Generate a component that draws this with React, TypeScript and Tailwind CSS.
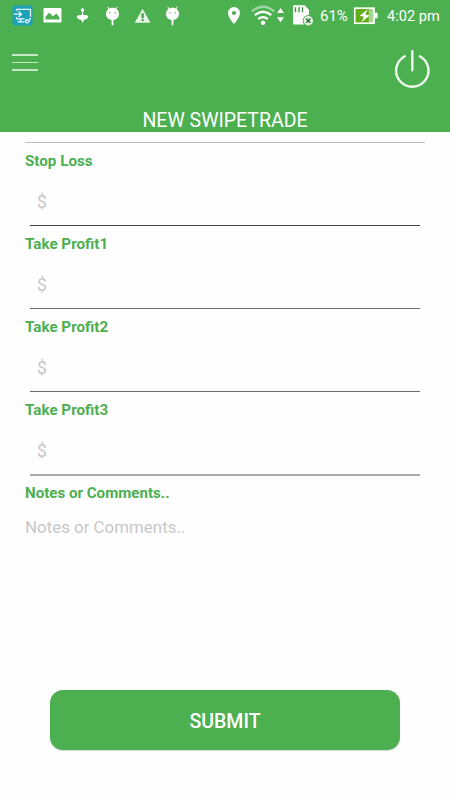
import { useState } from "react"
import type { ReactNode } from "react"

const FIELDS = [
  { label: "Stop Loss", line: "h-[48px] border-b border-[#444444]" },
  { label: "Take Profit1", line: "h-[48px] border-b border-[#6c6c6c]" },
  { label: "Take Profit2", line: "h-[48px] border-b border-[#6c6c6c]" },
  { label: "Take Profit3", line: "h-[49px] border-b-2 border-[#aaaaaa]" },
]

function StatusIcon({ children }: { children: ReactNode }) {
  return (
    <svg width="30" height="32" viewBox="0 0 30 32" className="shrink-0" fill="#fff">
      {children}
    </svg>
  )
}

function AndroidIcon() {
  return (
    <StatusIcon>
      <path d="M12 9 10.800 6.700M19 9l1.200-2.300" stroke="#fff" strokeWidth="1" />
      <path d="M9 13.800c0-3.300 2.700-6 6.500-6s6.500 2.700 6.500 6c0 3.700-2.500 6.200-6.500 6.200S9 17.500 9 13.800Z" />
      <rect x="14.600" y="19" width="1.800" height="6.500" rx="0.900" />
      <circle cx="12.900" cy="12.800" r="0.700" fill="#4caf50" />
      <circle cx="18.100" cy="12.800" r="0.700" fill="#4caf50" />
    </StatusIcon>
  )
}

function StatusBar() {
  return (
    <div className="flex h-8 items-center pl-[7px] text-white">
      {/* notifications */}
      <StatusIcon>
        <rect x="5.500" y="5.500" width="20" height="20" rx="2" fill="#1ba1b8" />
        <g fill="none" stroke="#e6f9fc" strokeWidth="1.300">
          <path d="M9.500 11V9.300h14v7.500M9.500 17v1.800h8M13.500 19v2.700M10.500 21.900h7" />
          <path d="M6.500 14.200h7.500M11.500 11.500l3 2.700-3 2.700" />
          <path d="M19 20h2.500M19 20a1.700 1.700 0 1 0 2.800 1.800l1.700-4" />
        </g>
      </StatusIcon>
      <StatusIcon>
        <path
          fillRule="evenodd"
          d="M7.500 8h16a1 1 0 0 1 1 1v12.500a1 1 0 0 1-1 1h-16a1 1 0 0 1-1-1V9a1 1 0 0 1 1-1Zm1 11.500h14v-2l-3.200-4-3.300 3-3.800-4-3.700 4.500Z"
        />
      </StatusIcon>
      <StatusIcon>
        <circle cx="15.500" cy="10" r="1.700" />
        <path d="M15 11h1v4.500h-1z" />
        <path d="M9.700 16.700c0-1.300 2.500-2 5.800-2s5.900.7 5.900 2-2.500 2.700-4.300 3.100L15.700 23l-1.700-3.200c-2-.4-4.300-1.800-4.300-3.100Z" />
      </StatusIcon>
      <AndroidIcon />
      <StatusIcon>
        <path d="M15.600 8.800 23.500 22.800H7.700Z" fill="#e2f4e3" />
        <path d="M14.700 13.200h1.900v5h-1.900zM14.700 19.300h1.900v1.800h-1.900z" fill="#358a39" />
      </StatusIcon>
      <AndroidIcon />

      {/* system indicators */}
      <svg width="98" height="32" viewBox="0 0 98 32" className="ml-[33px] shrink-0" fill="#fff">
        <path
          fillRule="evenodd"
          d="M14 7a6 6 0 0 0-6 6c0 4.500 6 11 6 11s6-6.500 6-11a6 6 0 0 0-6-6Zm0 3.900a2.100 2.100 0 1 1 0 4.200 2.100 2.100 0 0 1 0-4.200Z"
        />
        <g fill="none" strokeWidth="2.300">
          <path d="M31.800 11.300q11.200-9.200 22.400 0" stroke="#a0d7a2" />
          <path d="M34.700 15.100q8.300-6.600 16.600 0M38.200 19q4.800-3.800 9.600 0" stroke="#fff" />
        </g>
        <circle cx="43" cy="22.800" r="2.200" />
        <path d="M60.500 8 64 13h-7zM60.500 22.200l3.500-5h-7z" />
        <path d="M74 5.200h10.500l4.500 4.500V24.500H74a1 1 0 0 1-1-1V6.200a1 1 0 0 1 1-1Z" />
        <path d="M75.500 7.300v5M79 7.300v5M82.500 7.300v5" stroke="#3f8f43" strokeWidth="1.400" />
        <circle cx="88.300" cy="20.700" r="5.600" fill="#4caf50" />
        <circle cx="88.300" cy="20.700" r="4.700" fill="#e9f6ea" />
        <path d="m86.200 18.600 4.200 4.200M90.400 18.600l-4.200 4.200" stroke="#2f7a33" strokeWidth="1.500" />
      </svg>
      <span className="ml-[2px] w-[33px] whitespace-nowrap text-[15px] leading-8">61%</span>
      <svg width="26" height="32" viewBox="0 0 26 32" className="shrink-0">
        <rect x="1.800" y="8.200" width="19.200" height="15" fill="#a4d78d" stroke="#fff" strokeWidth="1.700" />
        <rect x="2.700" y="9.100" width="13" height="13.200" fill="#62ad16" />
        <rect x="21.800" y="12.700" width="2.800" height="5.600" fill="#fff" />
        <path d="m14.800 9.300-8 6.500 4.200 1-2.600 5.500 8.200-6.900-4.300-1Z" fill="#fff" />
      </svg>
      <span className="ml-[8px] whitespace-nowrap text-[14.600px] leading-8">4:02 pm</span>
    </div>
  )
}

function Header() {
  return (
    <header className="flex h-[132px] shrink-0 flex-col bg-[#4caf50] text-white">
      <StatusBar />
      <div className="flex h-[78px] items-start justify-between pl-3 pr-5">
        <button type="button" aria-label="Menu" className="mt-[22px] flex w-[26px] flex-col gap-[6px]">
          <span className="h-[1.500px] bg-[#c4e8c5]" />
          <span className="h-[1.500px] bg-[#c4e8c5]" />
          <span className="h-[1.500px] bg-[#c4e8c5]" />
        </button>
        <button type="button" aria-label="Log out" className="mt-[16px]">
          <svg width="36" height="42" viewBox="0 0 36 42" fill="none" stroke="#f0faf0" strokeWidth="2.400" strokeLinecap="round">
            <path d="M18.300 3.200v19M10.800 8.200a16.200 16.200 0 1 0 15 0" />
          </svg>
        </button>
      </div>
      <h1 className="text-center text-[19.500px] leading-[22px]">NEW SWIPETRADE</h1>
    </header>
  )
}

function PriceField({ label, line }: { label: string; line: string }) {
  const [value, setValue] = useState("")

  return (
    <label className="flex h-[83px] flex-col">
      <span className="mt-2 text-[15.200px] font-bold leading-5 text-[#4caf50]">{label}</span>
      <input
        value={value}
        onChange={(e) => setValue(e.target.value)}
        placeholder="$"
        inputMode="decimal"
        className={`mx-[5px] mt-[7px] shrink-0 px-[7px] text-[17.500px] text-[#333333] outline-none placeholder:text-[#c8c8c8] ${line}`}
      />
    </label>
  )
}

export default function App() {
  const [notes, setNotes] = useState("")

  return (
    <div className="flex h-[800px] w-[450px] flex-col overflow-hidden bg-[#fefefe] font-[Roboto,sans-serif]">
      <Header />
      <main className="mt-[10px] flex flex-1 flex-col px-[25px]">
        <div className="h-px bg-[#bdbdbd]" />
        {FIELDS.map((field) => (
          <PriceField key={field.label} label={field.label} line={field.line} />
        ))}
        <label className="flex flex-col">
          <span className="mt-2 text-[15.100px] font-bold leading-5 text-[#4caf50]">Notes or Comments..</span>
          <textarea
            value={notes}
            onChange={(e) => setNotes(e.target.value)}
            placeholder="Notes or Comments.."
            className="mt-3 h-[120px] resize-none text-[16.900px] leading-6 text-[#333333] outline-none placeholder:text-[#c8c8c8]"
          />
        </label>
        <button
          type="button"
          className="mx-[25px] mb-[50px] mt-auto h-[60px] rounded-[13px] bg-[#4caf50] pt-[3px] text-[19.500px] font-medium text-white shadow-[0_1px_1px_#00000026]"
        >
          SUBMIT
        </button>
      </main>
    </div>
  )
}
